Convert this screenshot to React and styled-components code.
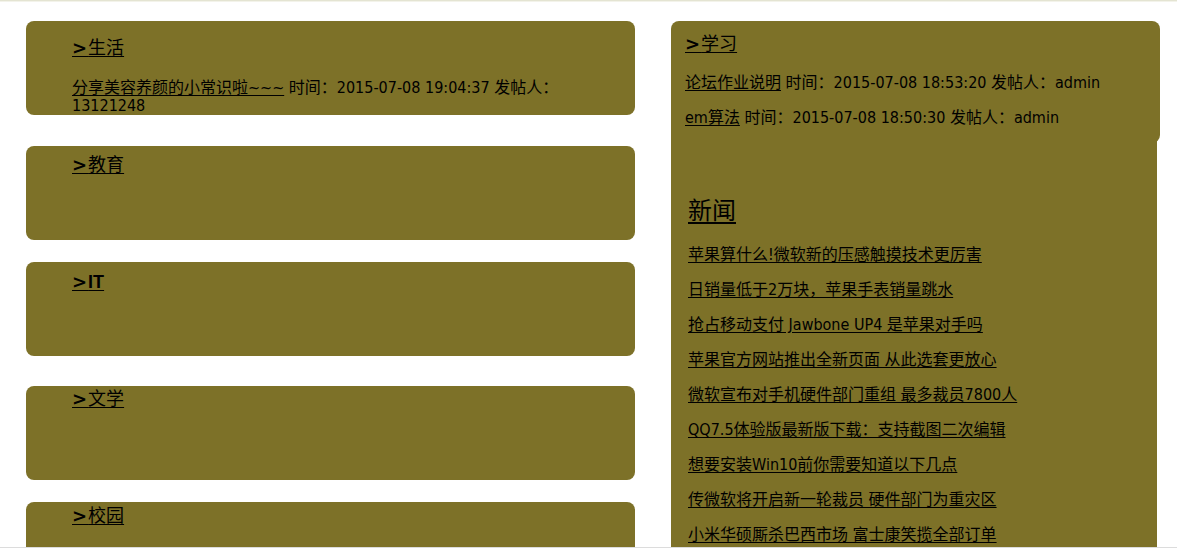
import React from "react";
import styled, { createGlobalStyle } from "styled-components";

const Global = createGlobalStyle`
  html, body {
    margin: 0;
    padding: 0;
    background: #ffffff;
    overflow: hidden;
  }
  body {
    font-family: "DejaVu Sans Condensed", "Liberation Sans", "Noto Sans CJK SC", sans-serif;
    color: #000;
  }
`;

const OLIVE = "#7d7128";

const TopRule = styled.div`
  height: 1px;
  background: #e4e4d2;
  border-bottom: 1px solid #f3f3ea;
`;

const BottomRule = styled.div`
  position: fixed;
  left: 0;
  right: 0;
  bottom: 0;
  height: 3px;
  background: #ffffff;
  border-top: 1px solid #dcdcdc;
`;

const Main = styled.main`
  display: flex;
  align-items: flex-start;
  gap: 36px;
  padding: 19px 0 0 26px;
`;

const LeftColumn = styled.section`
  display: flex;
  flex-direction: column;
  width: 609px;
`;

const Card = styled.div`
  box-sizing: border-box;
  height: 94px;
  margin-top: ${(p) => p.$mt}px;
  padding: ${(p) => p.$pt}px 46px 0 46px;
  background: ${OLIVE};
  border-radius: 8px;
`;

const Title = styled.h3`
  margin: 0;
  font-size: 18px;
  line-height: 22px;
  font-weight: 400;
`;

const TitleLink = styled.a`
  color: #000;
  text-decoration: underline;
  text-underline-offset: 2px;
`;

const Arrow = styled.span`
  font-family: "DejaVu Sans", "Liberation Sans", sans-serif;
  font-weight: 700;
  letter-spacing: 1px;
`;

const Name = styled.span`
  font-family: "Liberation Sans", "Noto Sans CJK SC", sans-serif;
  font-weight: ${(p) => (p.$bold ? 700 : 400)};
`;

const Post = styled.p`
  margin: ${(p) => p.$mt}px 0 0 0;
  font-size: 16px;
  line-height: 18px;
`;

const PostLink = styled.a`
  color: #000;
  text-decoration: underline;
  text-underline-offset: 2px;
`;

const RightColumn = styled.section`
  display: flex;
  flex-direction: column;
  width: 489px;
`;

const StudyCard = styled.div`
  box-sizing: border-box;
  height: 122px;
  padding: 12px 14px 0 14px;
  background: ${OLIVE};
  border-radius: 8px;
`;

const NewsPanel = styled.div`
  box-sizing: border-box;
  width: 486px;
  margin-top: -8px;
  padding: 60px 17px 40px 17px;
  background: ${OLIVE};
`;

const NewsTitle = styled.h2`
  margin: 0;
  font-family: "Noto Sans CJK SC", sans-serif;
  font-size: 24px;
  line-height: 28px;
  font-weight: 400;
  display: inline-block;
  text-decoration: underline;
  text-underline-offset: 3px;
`;

const NewsList = styled.ul`
  list-style: none;
  margin: 23px 0 0 0;
  padding: 0;
  display: flex;
  flex-direction: column;
  gap: 17px;
`;

const NewsItem = styled.li`
  font-size: 16px;
  line-height: 18px;
`;

const NewsLink = styled.a`
  color: #000;
  text-decoration: underline;
  text-underline-offset: 2px;
`;

const categories = [
  {
    name: "生活",
    mt: 0,
    pt: 16,
    posts: [
      {
        title: "分享美容养颜的小常识啦~~~",
        time: "2015-07-08 19:04:37",
        author: "13121248",
      },
    ],
  },
  { name: "教育", mt: 31, pt: 8, posts: [] },
  { name: "IT", mt: 22, pt: 9, bold: true, posts: [] },
  { name: "文学", mt: 30, pt: 2, posts: [] },
  { name: "校园", mt: 22, pt: 3, posts: [] },
];

const studyPosts = [
  { title: "论坛作业说明", time: "2015-07-08 18:53:20", author: "admin" },
  { title: "em算法", time: "2015-07-08 18:50:30", author: "admin" },
];

const news = [
  "苹果算什么!微软新的压感触摸技术更厉害",
  "日销量低于2万块，苹果手表销量跳水",
  "抢占移动支付 Jawbone UP4 是苹果对手吗",
  "苹果官方网站推出全新页面 从此选套更放心",
  "微软宣布对手机硬件部门重组 最多裁员7800人",
  "QQ7.5体验版最新版下载：支持截图二次编辑",
  "想要安装Win10前你需要知道以下几点",
  "传微软将开启新一轮裁员 硬件部门为重灾区",
  "小米华硕厮杀巴西市场 富士康笑揽全部订单",
];

function PostLine({ post, mt }) {
  return (
    <Post $mt={mt}>
      <PostLink href="#">{post.title}</PostLink> 时间：{post.time} 发帖人：
      {post.author}
    </Post>
  );
}

export default function App() {
  return (
    <>
      <Global />
      <TopRule />
      <Main>
        <LeftColumn>
          {categories.map((c) => (
            <Card key={c.name} $mt={c.mt} $pt={c.pt}>
              <Title>
                <TitleLink href="#">
                  <Arrow>&gt;</Arrow>
                  <Name $bold={c.bold}>{c.name}</Name>
                </TitleLink>
              </Title>
              {c.posts.map((p) => (
                <PostLine key={p.title} post={p} mt={20} />
              ))}
            </Card>
          ))}
        </LeftColumn>
        <RightColumn>
          <StudyCard>
            <Title>
              <TitleLink href="#">
                <Arrow>&gt;</Arrow>
                <Name>学习</Name>
              </TitleLink>
            </Title>
            {studyPosts.map((p, i) => (
              <PostLine key={p.title} post={p} mt={i === 0 ? 19 : 17} />
            ))}
          </StudyCard>
          <NewsPanel>
            <NewsTitle>新闻</NewsTitle>
            <NewsList>
              {news.map((n) => (
                <NewsItem key={n}>
                  <NewsLink href="#">{n}</NewsLink>
                </NewsItem>
              ))}
            </NewsList>
          </NewsPanel>
        </RightColumn>
      </Main>
      <BottomRule />
    </>
  );
}
